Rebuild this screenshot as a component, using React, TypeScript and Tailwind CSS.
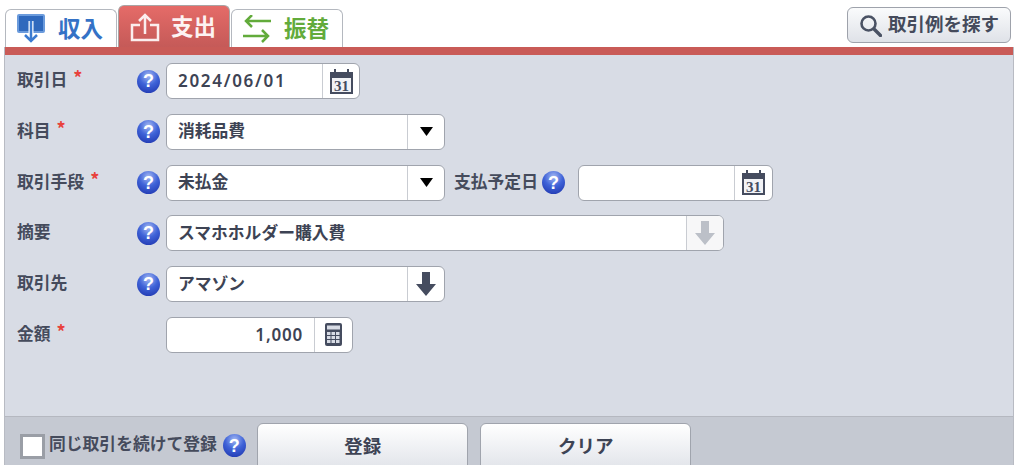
const FONT = "font-['Noto_Sans_CJK_JP',sans-serif]";

const HelpIcon = () => (
  <span className="flex h-[23px] w-[23px] shrink-0 items-center justify-center rounded-full bg-[radial-gradient(circle_at_50%_25%,#a3b8f2_0%,#3f63d8_45%,#1a2fa8_100%)] font-['Liberation_Sans',sans-serif] text-[18px] leading-none font-bold text-white">
    ?
  </span>
);

const Required = () => <span className="mb-[5px] ml-[6px] text-[18px] leading-none font-bold text-[#e8413c]">*</span>;

const CalendarIcon = () => (
  <svg width="23" height="25" viewBox="0 0 23 25">
    <path fill="#454c5f" d="M0 3h4V0h2v3h11V0h2v3h4v22H0z" />
    <rect x="2" y="9" width="19" height="14" fill="#f1f2f5" />
    <text x="11.5" y="22" textAnchor="middle" fill="#454c5f" fontSize="15" fontWeight="700" fontFamily="Liberation Serif, serif">31</text>
  </svg>
);

const CalculatorIcon = () => (
  <svg width="17" height="23" viewBox="0 0 17 23">
    <rect x="0" y="0" width="17" height="23" rx="2" fill="#454c5f" />
    <rect x="2" y="2.5" width="13" height="4" fill="#d8dce5" />
    {[9, 13, 17].map((y) =>
      [2, 6.5, 11].map((x) => <rect key={`${x}-${y}`} x={x} y={y} width="3.5" height="3" fill="#d8dce5" />)
    )}
  </svg>
);

const CaretIcon = () => (
  <svg width="13" height="9" viewBox="0 0 13 9">
    <path d="M0 0h13L6.5 9z" fill="#000" />
  </svg>
);

const ArrowDownIcon = ({ color }: { color: string }) => (
  <svg width="20" height="24" viewBox="0 0 20 24">
    <path d="M6 0h8v12h6L10 24 0 12h6z" fill={color} />
  </svg>
);

interface FieldProps {
  width: string;
  value?: string;
  right?: boolean;
  addon: React.ReactNode;
  addonWidth: string;
  addonBg?: string;
  valueClass?: string;
}

const Field = ({ width, value, right, addon, addonWidth, addonBg, valueClass }: FieldProps) => (
  <div className={`flex h-[36px] shrink-0 overflow-hidden rounded-[6px] border border-[#a0a4ad] bg-white ${width}`}>
    <div
      className={`flex min-w-0 flex-1 items-center px-[11px] text-[#3d4354] ${right ? 'justify-end' : ''} ${
        valueClass ?? 'pb-[2px] text-[16.8px] font-bold'
      }`}
    >
      {value}
    </div>
    <div className={`flex shrink-0 items-center justify-center border-l border-[#c9ccd2] ${addonWidth} ${addonBg ?? ''}`}>
      {addon}
    </div>
  </div>
);

const Row = ({ label, required, help = true, children }: { label: string; required?: boolean; help?: boolean; children: React.ReactNode }) => (
  <div className="flex h-[36px] items-center">
    <div className="flex w-[120px] shrink-0 items-center pb-[3px] text-[16.8px] font-bold text-[#454b5c]">
      {label}
      {required && <Required />}
    </div>
    <div className="w-[29px] shrink-0">{help && <HelpIcon />}</div>
    {children}
  </div>
);

const App = () => {
  return (
    <div className={`h-[465px] w-[1024px] overflow-hidden bg-white ${FONT}`}>
      {/* Tabs */}
      <div className="flex h-[47px] items-end pr-[11px] pl-[5px]">
        <div className="flex h-[38px] w-[112px] items-center gap-[13px] rounded-t-[6px] border border-b-0 border-[#b4b8bf] bg-white pl-[11px]">
          <svg width="28" height="29" viewBox="0 0 28 29" fill="none">
            <rect x="1" y="1" width="26" height="17" rx="1" fill="#2f69bd" stroke="#6b9bdc" strokeWidth="2" />
            <path d="M14 7v20" stroke="#fff" strokeWidth="5" />
            <path d="M14 7v20M8 21l6 6 6-6" stroke="#3b7bd1" strokeWidth="2.5" />
          </svg>
          <span className="pb-[2px] text-[22.5px] font-bold text-[#3472c6]">収入</span>
        </div>
        <div className="ml-px flex h-[42px] w-[112px] items-center gap-[11px] rounded-t-[6px] border border-b-0 border-[#a9a4a4] bg-gradient-to-b from-[#e56b68] to-[#c55a58] pl-[11px]">
          <svg width="30" height="30" viewBox="0 0 30 30" fill="none" stroke="#fbeeee" strokeWidth="2.5">
            <path d="M10 13H2v15h26V13h-8" />
            <path d="M15 22V3M9 9l6-6 6 6" />
          </svg>
          <span className="pb-[2px] text-[22.5px] font-bold text-[#fdf3f3]">支出</span>
        </div>
        <div className="ml-px flex h-[38px] w-[112px] items-center gap-[13px] rounded-t-[6px] border border-b-0 border-[#b4b8bf] bg-white pl-[11px]">
          <svg width="28" height="28" viewBox="0 0 28 28" fill="none" stroke="#62ab3b" strokeWidth="2.5">
            <path d="M28 6H3M9 0 3 6l6 6" />
            <path d="M0 21h25M19 15l6 6-6 6" />
          </svg>
          <span className="pb-[2px] text-[22.5px] font-bold text-[#62ab3b]">振替</span>
        </div>
        <div className="mr-[2px] mb-[4px] ml-auto flex h-[36px] w-[164px] items-center justify-center gap-[6px] rounded-[6px] border border-[#9ea2ab] bg-gradient-to-b from-[#fafbfc] to-[#dfe2e8] text-[18.5px] font-bold text-[#454b5c]">
          <svg width="23" height="23" viewBox="0 0 23 23" fill="none" stroke="#4a5264">
            <circle cx="9.5" cy="9.5" r="7" strokeWidth="2.6" />
            <path d="m15 15 6.5 6.5" strokeWidth="3.4" strokeLinecap="round" />
          </svg>
          <span className="pb-[2px]">取引例を探す</span>
        </div>
      </div>

      {/* Panel */}
      <div className="mr-[10px] ml-[4px] flex h-[418px] flex-col border-x border-[#b8bbc3] bg-[#d8dce5]">
        <div className="h-[8px] shrink-0 bg-[#c95b57]" />
        <div className="flex flex-1 flex-col gap-[14.8px] pt-[8px] pl-[12px]">
          <Row label="取引日" required>
            <Field
              width="w-[194px]"
              value="2024/06/01"
              valueClass="font-['Noto_Sans',sans-serif] text-[17px] font-semibold tracking-[1.7px]"
              addon={<CalendarIcon />}
              addonWidth="w-[37px]"
            />
          </Row>
          <Row label="科目" required>
            <Field width="w-[279px]" value="消耗品費" addon={<CaretIcon />} addonWidth="w-[37px]" />
          </Row>
          <Row label="取引手段" required>
            <Field width="w-[279px]" value="未払金" addon={<CaretIcon />} addonWidth="w-[37px]" />
            <span className="ml-[9px] shrink-0 pb-[3px] text-[16.8px] font-bold text-[#454b5c]">支払予定日</span>
            <span className="mr-[13px] ml-[4px]">
              <HelpIcon />
            </span>
            <Field width="w-[195px]" addon={<CalendarIcon />} addonWidth="w-[38px]" />
          </Row>
          <Row label="摘要">
            <Field width="w-[558px]" value="スマホホルダー購入費" addon={<ArrowDownIcon color="#bcc0c8" />} addonWidth="w-[37px]" addonBg="bg-[#f7f7f8]" />
          </Row>
          <Row label="取引先">
            <Field width="w-[279px]" value="アマゾン" addon={<ArrowDownIcon color="#454c5f" />} addonWidth="w-[37px]" />
          </Row>
          <Row label="金額" required help={false}>
            <Field
              width="w-[187px]"
              value="1,000"
              right
              valueClass="font-['Noto_Sans',sans-serif] text-[17px] font-semibold tracking-[0.8px]"
              addon={<CalculatorIcon />}
              addonWidth="w-[38px]"
            />
          </Row>
        </div>

        {/* Footer */}
        <div className="flex h-[49px] shrink-0 items-start border-t border-[#b5b8c0] bg-[#c5c9d2] pl-[15px]">
          <div className="mt-[17px] h-[25px] w-[25px] shrink-0 border-[3px] border-[#9a9ea6] bg-white" />
          <span className="mt-[14px] ml-[4px] shrink-0 text-[16.8px] font-bold text-[#454b5c]">同じ取引を続けて登録</span>
          <span className="mt-[17px] ml-[6px]">
            <HelpIcon />
          </span>
          <button className="mt-[6px] ml-[11.5px] h-[50px] w-[211px] shrink-0 rounded-[6px] border border-[#a0a4ad] bg-gradient-to-b from-white to-[#dfe2e8] pb-[5px] text-[18.5px] font-bold text-[#3d4354]">
            登録
          </button>
          <button className="mt-[6px] ml-[12px] h-[50px] w-[211px] shrink-0 rounded-[6px] border border-[#a0a4ad] bg-gradient-to-b from-white to-[#dfe2e8] pb-[5px] text-[18.5px] font-bold text-[#3d4354]">
            クリア
          </button>
        </div>
      </div>
    </div>
  );
};

export default App;
